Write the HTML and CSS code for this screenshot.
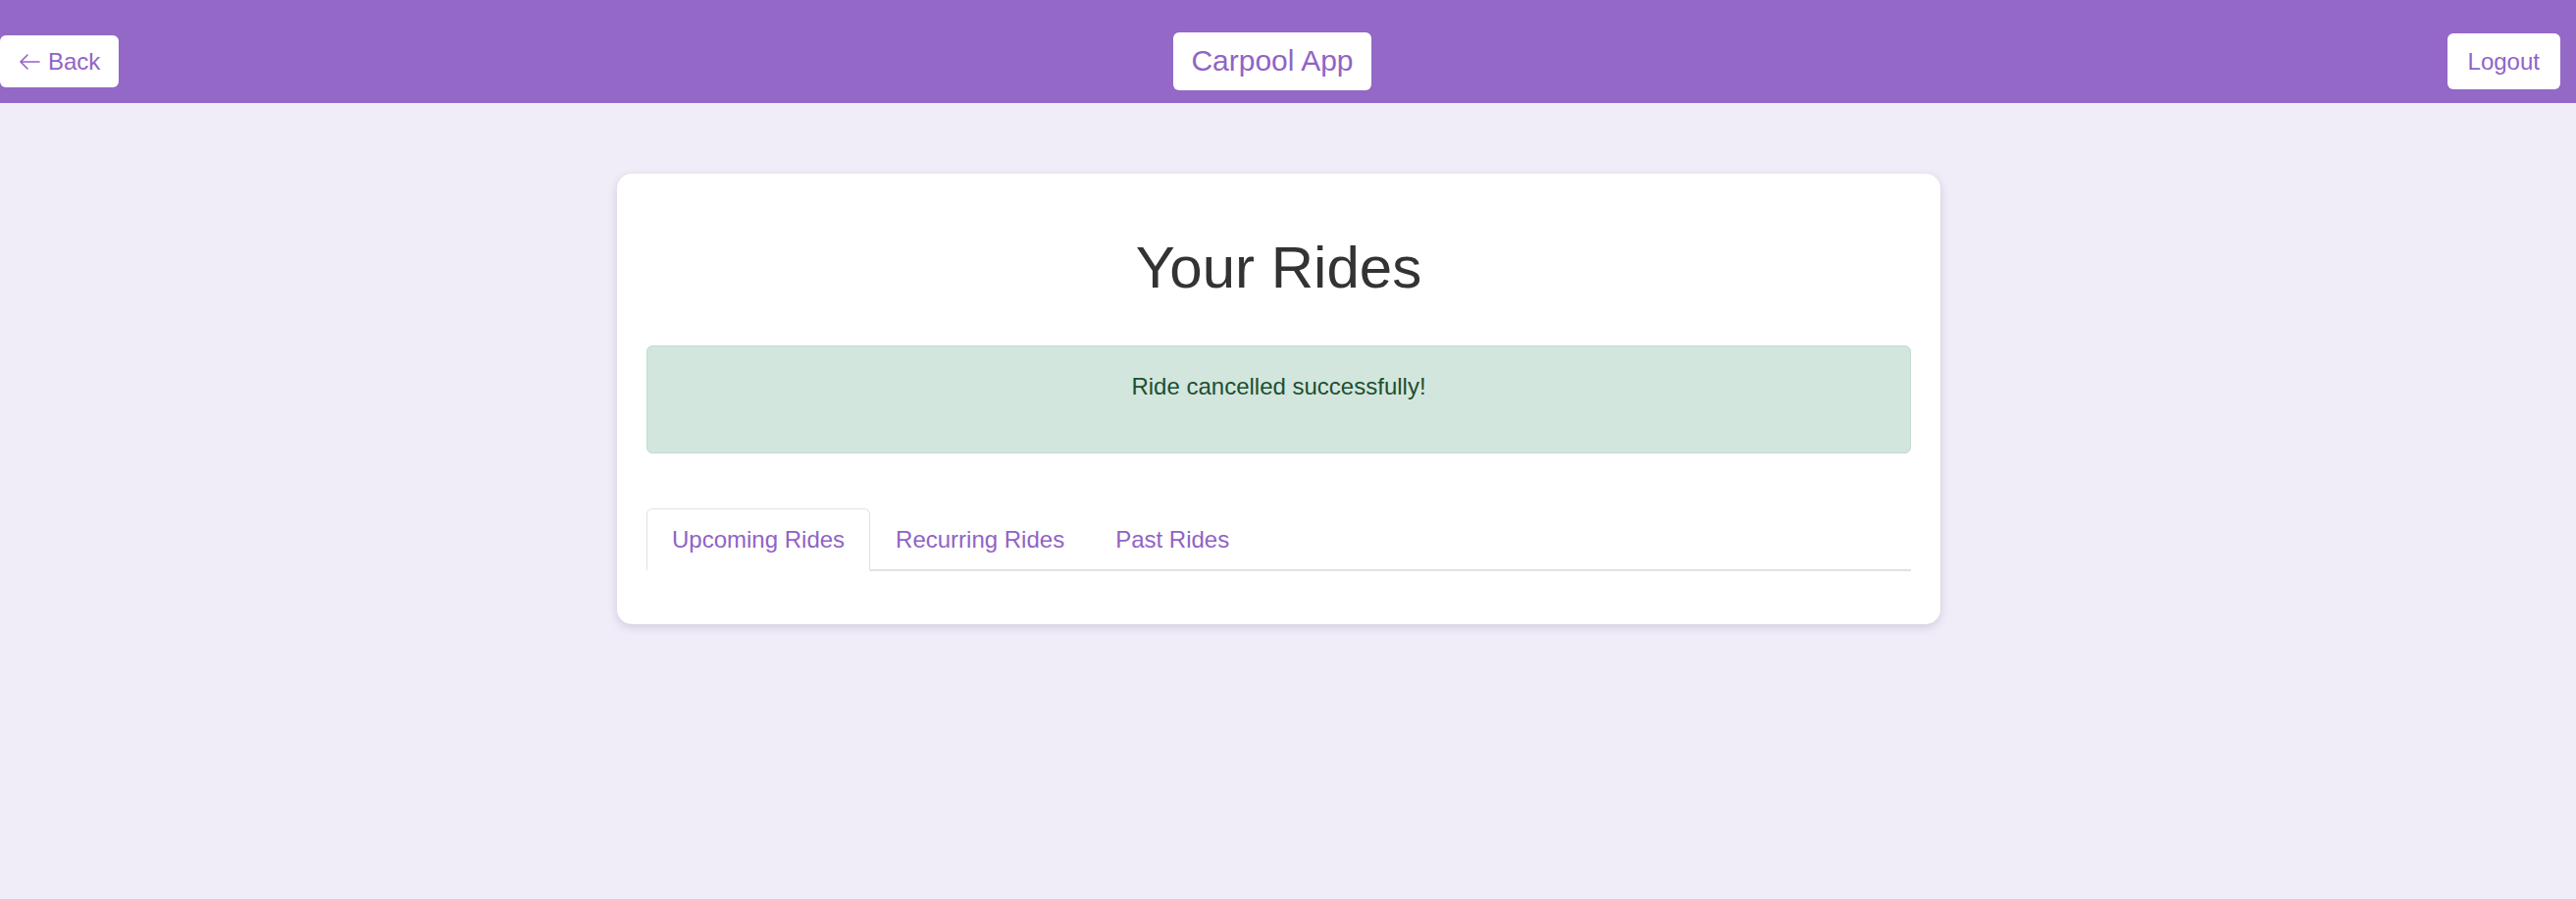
FILE: index.html
```html
<!DOCTYPE html>
<html lang="en">
<head>
<meta charset="utf-8">
<title>Your Rides - Carpool App</title>
<link rel="stylesheet" href="styles.css">
</head>
<body>
<header class="topbar">
  <a class="btn btn-back" href="#"><svg class="arrow" width="22" height="18" viewBox="0 0 22 18" aria-hidden="true"><path d="M21 9H2M9 2L2 9l7 7" fill="none" stroke="currentColor" stroke-width="1.6" stroke-linecap="round" stroke-linejoin="round"/></svg><span>Back</span></a>
  <a class="btn btn-brand" href="#">Carpool App</a>
  <a class="btn btn-logout" href="#">Logout</a>
</header>
<main class="main">
  <section class="card">
    <h1 class="title">Your Rides</h1>
    <div class="alert">Ride cancelled successfully!</div>
    <nav class="tabs">
      <a class="tab tab-active" href="#">Upcoming Rides</a>
      <a class="tab" href="#">Recurring Rides</a>
      <a class="tab" href="#">Past Rides</a>
    </nav>
  </section>
</main>
</body>
</html>
```

FILE: styles.css
```css
html, body {
  margin: 0;
  padding: 0;
}
body {
  background: #f0edf8;
  font-family: "Liberation Sans", Arial, Helvetica, sans-serif;
  font-size: 24px;
  min-height: 916px;
}
.topbar {
  box-sizing: border-box;
  height: 105px;
  padding: 20px 16px 0 0;
  background: #9368c6;
  display: flex;
  align-items: center;
  justify-content: space-between;
}
.btn {
  display: block;
  background: #ffffff;
  color: #9163c6;
  text-decoration: none;
  border-radius: 6px;
  line-height: 27.6px;
  font-size: 24px;
}
.btn-back {
  display: flex;
  align-items: center;
  gap: 8px;
  padding: 13px 19px 13px 19px;
}
.arrow {
  display: block;
  flex: none;
}
.btn-brand {
  font-size: 30px;
  line-height: 34.5px;
  padding: 12px 18px;
  margin-right: 22px;
}
.btn-logout {
  padding: 15px 21px;
}
.main {
  display: flex;
  justify-content: center;
  padding: 72px 19px 0 0;
}
.card {
  box-sizing: border-box;
  width: 1349px;
  background: #ffffff;
  border-radius: 15px;
  padding: 30px 30px 30px 30px;
  box-shadow: 0 3px 10px rgba(60, 50, 90, 0.18);
}
.title {
  margin: 31px 0 45px;
  text-align: center;
  font-size: 60px;
  font-weight: 400;
  line-height: 69px;
  color: #333333;
}
.alert {
  background: #d3e6dd;
  border: 1.5px solid #bfdccd;
  border-radius: 6px;
  color: #1d4f30;
  text-align: center;
  line-height: 27.6px;
  padding: 27px 24px 53px;
  margin-bottom: 56px;
}
.tabs {
  display: flex;
  border-bottom: 2px solid #dee2e6;
  margin-bottom: 24px;
}
.tab {
  display: block;
  padding: 17px 25px;
  line-height: 27.6px;
  color: #9163c6;
  text-decoration: none;
  border: 1px solid transparent;
  border-radius: 6px 6px 0 0;
  margin-bottom: -2px;
}
.tab-active {
  border-color: #dee2e6 #dee2e6 #ffffff;
  border-bottom-width: 2px;
  background: #ffffff;
}
```
